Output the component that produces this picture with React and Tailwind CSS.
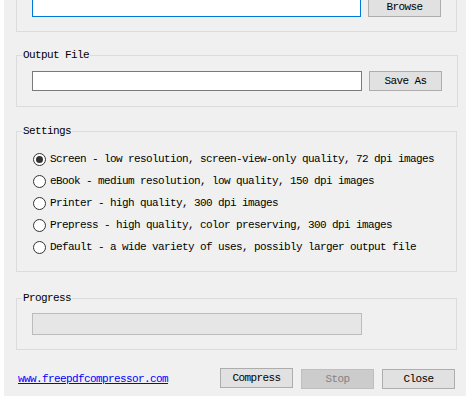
import React, { useState } from "react";

const font = { fontFamily: '"Liberation Mono", "DejaVu Sans Mono", monospace' };

const presets = [
  "Screen - low resolution, screen-view-only quality, 72 dpi images",
  "eBook - medium resolution, low quality, 150 dpi images",
  "Printer - high quality, 300 dpi images",
  "Prepress - high quality, color preserving, 300 dpi images",
  "Default - a wide variety of uses, possibly larger output file",
];

function Button({ children, disabled, className = "" }) {
  return (
    <button
      type="button"
      disabled={disabled}
      className={`w-[73px] h-[20px] shrink-0 border text-[11px] leading-[18px] tracking-[-0.6px] ${
        disabled
          ? "bg-[#cccccc] border-[#bfbfbf] text-[#838383]"
          : "bg-[#e1e1e1] border-[#adadad] text-black"
      } ${className}`}
    >
      {children}
    </button>
  );
}

function Legend({ children }) {
  return (
    <legend className="ml-[5px] px-[1px] text-[11px] leading-[13px] tracking-[-0.6px] text-black">
      {children}
    </legend>
  );
}

export default function App() {
  const [preset, setPreset] = useState(0);

  return (
    <div className="w-[468px] h-[399px] bg-white overflow-hidden" style={font}>
      <div className="ml-[4px] w-[462px] h-full bg-[#f0f0f0] pl-[12px]">
        {/* input file (scrolled off the top) */}
        <div className="w-[441px] border-x border-b border-[#dcdcdc] px-[15px] pb-[14px]">
          <div className="flex gap-[7px] mt-[-3px]">
            <input className="w-[330px] h-[20px] border border-[#0078d7] bg-white outline-none" />
            <Button>Browse</Button>
          </div>
        </div>

        {/* output file */}
        <fieldset className="w-[441px] mt-[17px] border border-[#dcdcdc]">
          <Legend>Output File</Legend>
          <div className="flex gap-[7px] px-[15px] pt-[9px] pb-[15px]">
            <input className="w-[330px] h-[20px] border border-[#7a7a7a] bg-white outline-none" />
            <Button>Save As</Button>
          </div>
        </fieldset>

        {/* settings */}
        <fieldset className="w-[441px] mt-[18px] border border-[#dcdcdc]">
          <Legend>Settings</Legend>
          <div className="flex flex-col px-[15px] pt-[10px] pb-[13px]">
            {presets.map((p, i) => (
              <label
                key={i}
                onClick={() => setPreset(i)}
                className="flex items-center h-[22px] cursor-default"
              >
                <span className="ml-[1px] w-[13px] h-[13px] rounded-full border border-[#333333] bg-white flex items-center justify-center">
                  {preset === i && (
                    <span className="w-[7px] h-[7px] rounded-full bg-[#333333]" />
                  )}
                </span>
                <span className="ml-[4px] text-[11px] tracking-[-0.6px] text-black whitespace-nowrap">
                  {p}
                </span>
              </label>
            ))}
          </div>
        </fieldset>

        {/* progress */}
        <fieldset className="w-[441px] mt-[20px] border border-[#dcdcdc]">
          <Legend>Progress</Legend>
          <div className="px-[15px] pt-[8px] pb-[14px]">
            <div className="w-[330px] h-[22px] border border-[#bcbcbc] bg-[#e6e6e6]" />
          </div>
        </fieldset>

        {/* bottom row */}
        <div className="w-[441px] mt-[18px] flex items-start justify-between">
          <a
            href="#"
            className="ml-[2px] mt-[5px] text-[11px] leading-[13px] tracking-[-0.6px] text-[#0000ff] underline"
          >
            www.freepdfcompressor.com
          </a>
          <div className="flex items-start gap-[8px] mr-[2px]">
            <Button>Compress</Button>
            <Button disabled className="mt-[1px]">
              Stop
            </Button>
            <Button className="mt-[1px]">Close</Button>
          </div>
        </div>
      </div>
    </div>
  );
}
